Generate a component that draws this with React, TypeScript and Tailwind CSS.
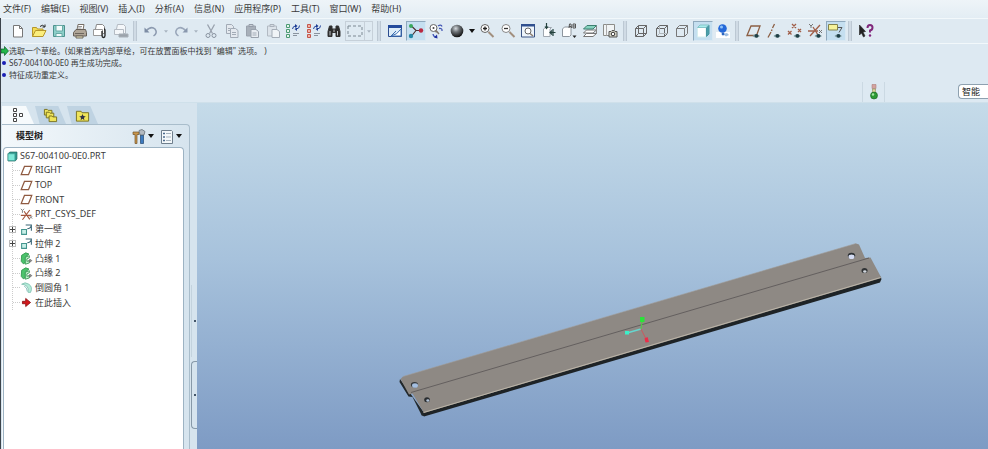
import { useState } from "react";
import type { ReactNode } from "react";
import clsx from "clsx";

const Icon = ({ children, size = "w-4 h-4" }: { children: ReactNode; size?: string }) => (
  <svg viewBox="0 0 16 16" className={clsx(size, "shrink-0")} fill="none" stroke="#555" strokeWidth="1">
    {children}
  </svg>
);

const Eye = () => (
  <g stroke="none">
    <path d="M6.500 13q3-3.500 7.500 0q-4 3-7.500 0z" fill="#7e9a9c" />
    <circle cx="10.500" cy="12.800" r="1.900" fill="#1f3f46" />
  </g>
);

const icons = {
  newFile: (
    <Icon>
      <path d="M3.500 2.500h6l3 3v8.500h-9z" fill="#fff" stroke="#777" />
      <path d="M9.500 2.500v3h3" stroke="#777" />
    </Icon>
  ),
  open: (
    <Icon>
      <path d="M1.500 13.500v-9h4l1 1.500h5.500v2" fill="#f3dc55" stroke="#b5962a" />
      <path d="M1.500 13.500l3-6h10.500l-3 6z" fill="#fbee7c" stroke="#b5962a" />
      <path d="M9 3.500q2.500-2.500 4.500 0M14 1.500v2.500h-2.500" stroke="#222" />
    </Icon>
  ),
  save: (
    <Icon>
      <path d="M2.500 2.500h11v11h-11z" fill="#8ccfc9" stroke="#4c918d" />
      <path d="M5 2.500h6.500v5.500h-6.500zM5 10.500h6v3h-6z" fill="#f2fbfb" stroke="#69a9a5" />
    </Icon>
  ),
  print: (
    <Icon>
      <path d="M5 7l1-5.500h6l-1 5.500z" fill="#fff" stroke="#776f66" />
      <path d="M1.500 9.500l2.500-3h9.500l1 3v3.500h-13z" fill="#b0a698" stroke="#665f57" />
      <path d="M3 10.500h9M4 13h7v2h-7z" fill="#eee7c2" stroke="#6d665d" />
      <path d="M6 3.500h4M5.500 5h4" stroke="#999" />
    </Icon>
  ),
  mail: (
    <Icon>
      <path d="M4.500 1.500h6l2 2v7h-10z" fill="#fff" stroke="#888" />
      <path d="M1.500 6.500h9v6h-9z" fill="#fff" stroke="#999" />
      <path d="M10 8v4.500q0 2 1.500 2t1.500-2v-5q0-1.500-1-1.500" stroke="#222" strokeWidth="1.300" />
    </Icon>
  ),
  mailLink: (
    <Icon>
      <path d="M4.500 1.500h6l2 2v7h-10z" fill="#f4f7fa" stroke="#b4bbc3" />
      <path d="M1.500 6.500h9v5h-9z" fill="#f4f7fa" stroke="#b4bbc3" />
      <path d="M6 11h9v3h-9z" fill="#9ba3ab" stroke="#a8b0b8" />
    </Icon>
  ),
  undo: (
    <Icon>
      <path d="M3 8q5-5.500 9-2q3 4-1.500 7" stroke="#8d9bb0" strokeWidth="1.500" />
      <path d="M1.500 4.500v5h5z" fill="#7d8ca4" stroke="none" />
    </Icon>
  ),
  redo: (
    <Icon>
      <path d="M13 8q-5-5.500-9-2q-3 4 1.500 7" stroke="#9aa7ba" strokeWidth="1.500" />
      <path d="M14.500 4.500v5h-5z" fill="#8998ae" stroke="none" />
    </Icon>
  ),
  cut: (
    <Icon>
      <path d="M4.500 1.500l5 9M11.500 1.500l-5 9" stroke="#98a1ad" strokeWidth="1.300" />
      <circle cx="5" cy="12.500" r="2" stroke="#8993a0" />
      <circle cx="11" cy="12.500" r="2" stroke="#8993a0" />
    </Icon>
  ),
  copy: (
    <Icon>
      <path d="M2.500 1.500h5l2 2v7h-7z" fill="#e4e9ef" stroke="#a2abb6" />
      <path d="M6.500 5.500h5l2.500 2v7h-7.500z" fill="#e4e9ef" stroke="#a2abb6" />
      <path d="M4 5.500h2M4 7.500h2M8 9.500h4M8 11.500h4" stroke="#a2abb6" />
    </Icon>
  ),
  paste: (
    <Icon>
      <path d="M2.500 3h9v10h-9z" fill="#a8b0ba" stroke="#9aa2ad" />
      <path d="M5 1.500h4v2h-4z" fill="#c9d0d7" stroke="#949ca8" />
      <path d="M7 6.500h5l2.500 2v6h-7.500z" fill="#e7ecf1" stroke="#99a2ad" />
      <path d="M8.500 10h4M8.500 12h4" stroke="#a2abb6" />
    </Icon>
  ),
  pasteSpecial: (
    <Icon>
      <path d="M2.500 3h9v10h-9z" fill="#dce3ea" stroke="#b2bac3" />
      <path d="M5 1.500h4v2h-4z" fill="#d5dce3" stroke="#aab2bc" />
      <path d="M7 6.500h5l2.500 2v6h-7.500z" fill="#f0f4f7" stroke="#a4adb7" />
    </Icon>
  ),
  regen: (
    <Icon>
      <path d="M1.500 1.500h3v3h-3zM1.500 6.500h3v3h-3zM1.500 11.500h3v3h-3z" fill="#e6f5ec" stroke="#4b9a73" />
      <path d="M7.500 6q.5-3 3-3M14.500 2.500q0 3-3 3.500" stroke="#1e3f9a" />
      <path d="M10 1l2.500 2-2.500 2zM12 4.500v3.500l-2.500-2z" fill="#1c3b94" stroke="none" />
      <path d="M8 10.500h6M8 12.500h4" stroke="#8a939e" />
    </Icon>
  ),
  regenManager: (
    <Icon>
      <path d="M1.500 1.500h3v3h-3zM1.500 6.500h3v3h-3zM1.500 11.500h3v3h-3z" fill="#f3b2a8" stroke="#c4574b" />
      <path d="M7.500 6q.5-3 3-3M14.500 2.500q0 3-3 3.500" stroke="#1e3f9a" />
      <path d="M10 1l2.500 2-2.500 2zM12 4.500v3.500l-2.500-2z" fill="#1c3b94" stroke="none" />
      <path d="M8 10.500h6M8 12.500h4" stroke="#8a939e" />
    </Icon>
  ),
  find: (
    <Icon>
      <path d="M3.500 3h2.500v3h4v-3h2.500l1.500 5.500v5h-4v-4h-4v4h-4v-5z" fill="#2b2b2b" stroke="#333" />
      <path d="M4 8v4.500M11.500 8v4.500M8 6.500v2.500" stroke="#c3c7ca" />
    </Icon>
  ),
  repaint: (
    <Icon>
      <path d="M1.500 2.500h13v11h-13z" fill="#dcecf8" stroke="#2a4b8f" />
      <path d="M1 2h14v3h-14z" fill="#244b9c" stroke="none" />
      <path d="M14 6v7h-10q6-1 10-7z" fill="#fff" stroke="#4376b6" />
      <path d="M4 13l5-5" stroke="#3d6cae" />
    </Icon>
  ),
  spinCenter: (
    <Icon>
      <path d="M4 3.500l4 4h4M8 7.500l-4 5" stroke="#4d3030" strokeWidth="1.200" />
      <circle cx="3" cy="3" r="2" fill="#39a85c" stroke="none" />
      <circle cx="13" cy="7.500" r="2.200" fill="#b92840" stroke="none" />
      <circle cx="3" cy="13" r="2.200" fill="#2387a6" stroke="none" />
    </Icon>
  ),
  orient: (
    <Icon>
      <circle cx="5.500" cy="5" r="3.500" fill="#fff" stroke="#666" />
      <circle cx="5.500" cy="5" r="1" fill="#444" stroke="none" />
      <path d="M8 7.500l3 3.500M8.500 9.500l-1-2" stroke="#7f756a" strokeWidth="1.400" />
      <path d="M10 3q3-2 4 .5M11 5.500q3.500-.500 3 2.500M5 11q.5 3 3 3" stroke="#4457b5" strokeWidth="1.300" />
      <path d="M6 14.500l3-3 .5 4z" fill="#1d2ea0" stroke="none" />
    </Icon>
  ),
  shade: (
    <Icon>
      <defs>
        <radialGradient id="ball" cx="0.4" cy="0.3" r="0.700">
          <stop offset="0" stopColor="#d6dade" />
          <stop offset="0.4" stopColor="#6f7478" />
          <stop offset="1" stopColor="#111" />
        </radialGradient>
      </defs>
      <circle cx="8" cy="8" r="6.300" fill="url(#ball)" stroke="none" />
    </Icon>
  ),
  zoomIn: (
    <Icon>
      <path d="M9.500 9l5 5" stroke="#a28f7e" strokeWidth="2" />
      <circle cx="6" cy="5.500" r="4" fill="#fff" stroke="#666" />
      <path d="M4 5.500h4M6 3.500v4" stroke="#222" strokeWidth="1.300" />
    </Icon>
  ),
  zoomOut: (
    <Icon>
      <path d="M9.500 9l5 5" stroke="#a28f7e" strokeWidth="2" />
      <circle cx="6" cy="5.500" r="4" fill="#fff" stroke="#888" />
      <path d="M4 5.500h4" stroke="#333" strokeWidth="1.300" />
    </Icon>
  ),
  refit: (
    <Icon>
      <path d="M1.500 1.500h13v12.500h-13z" fill="#eef5fb" stroke="#3c5484" />
      <path d="M1 1h14v2.500h-14z" fill="#30508f" stroke="none" />
      <circle cx="8" cy="8" r="3" fill="#fff" stroke="#666" />
      <path d="M10 10.500l3 2.500" stroke="#8a7a6c" strokeWidth="1.500" />
    </Icon>
  ),
  reorient: (
    <Icon>
      <path d="M2.500 6l2-1.500h6l-1.500 1.500v7.500h-6.500z" fill="#fff" stroke="#a0a8b0" />
      <path d="M5.500 0v5M4 3.500l1.500 2 1.500-2" stroke="#22403c" strokeWidth="1.200" />
      <path d="M14.500 9.500h-5M11 7.500l-2 2 2 2M12 6v7" stroke="#22403c" strokeWidth="1.200" />
    </Icon>
  ),
  savedViews: (
    <Icon>
      <path d="M1.500 6l2-2h6.500v8l-1.500 1.500h-7z" fill="#fff" stroke="#8e969e" />
      <path d="M8 5l.500-4h1.500l.5 4M8 3.500h2M12 1v4h2.500v-4zM12 3h2.500" stroke="#555" />
      <path d="M11.500 12.500h4l-2 2.500z" fill="#222" stroke="none" />
    </Icon>
  ),
  layers: (
    <Icon>
      <path d="M1.500 13.500l3-3h10l-3.500 3z" fill="#fff" stroke="#777" />
      <path d="M1.500 10l3-3h10l-3.500 3z" fill="#fff" stroke="#777" />
      <path d="M1.500 6l3.500-3.500h9.500l-3.500 3.500z" fill="#86d3bf" stroke="#3d7e70" />
      <path d="M14.500 3v8" stroke="#888" />
    </Icon>
  ),
  viewManager: (
    <Icon>
      <path d="M1.500 1.500h11v11h-11z" fill="#f1f4f5" stroke="#8c8c88" />
      <path d="M4.500 1.500v11" stroke="#aaa" />
      <path d="M7 8.500h2l1-1h2l1 1h2v5.500h-8z" fill="#d9d8c9" stroke="#555" />
      <circle cx="11" cy="11" r="1.800" fill="#fff" stroke="#333" />
    </Icon>
  ),
  wireframe: (
    <Icon>
      <path d="M2.500 5.500h8v8h-8zM5.500 2.500h8v8h-8zM2.500 5.500l3-3M10.500 5.500l3-3M2.500 13.500l3-3M10.500 13.500l3-3" stroke="#666" />
    </Icon>
  ),
  hiddenLine: (
    <Icon>
      <path d="M2.500 5.500h8v8h-8zM2.500 5.500l3-3h8v8l-3 3M10.500 5.500l3-3" stroke="#666" />
      <path d="M5.500 3v7.500h8M5.500 10.500l-3 3" stroke="#b2b8bc" />
    </Icon>
  ),
  noHidden: (
    <Icon>
      <path d="M2.500 5.500h8v8h-8zM2.500 5.500l3-3h8v8l-3 3M10.500 5.500l3-3" stroke="#777" />
    </Icon>
  ),
  shading: (
    <Icon>
      <path d="M2.500 4.500h8.500v9.500h-8.500z" fill="#fff" stroke="#d5eeee" />
      <path d="M2.500 4.500l2.500-2.500h9l-3 2.500z" fill="#a9ecec" stroke="#85c5c9" />
      <path d="M11.500 5l2.500-2.500v8.500l-2.500 2.500z" fill="#4a9faa" stroke="#4796a1" />
    </Icon>
  ),
  realism: (
    <Icon>
      <path d="M1 9h14v6h-14z" fill="#fff" stroke="none" />
      <path d="M8 11l4-1 2 2-3 1.500z" fill="#9bbbe0" stroke="none" />
      <circle cx="7.500" cy="5.500" r="4.300" fill="#2468d8" stroke="none" />
      <circle cx="6.500" cy="4" r="1.500" fill="#8fc3fb" stroke="none" />
      <circle cx="8" cy="11" r="1.400" fill="#2c66c0" stroke="none" />
    </Icon>
  ),
  planes: (
    <Icon>
      <path d="M1 12.500l4-9.500h9l-3.500 9.500z" stroke="#8c5f44" strokeWidth="1.300" />
      <Eye />
    </Icon>
  ),
  axes: (
    <Icon>
      <path d="M7.500 1l-2 4M5 6.500l-.5 1.500M4 9l-3 5.500" stroke="#8c5f44" strokeWidth="1.300" />
      <Eye />
    </Icon>
  ),
  points: (
    <Icon>
      <path d="M5 1l4 4M9 1l-4 4M1 8l3.500 3.500M4.500 8l-3.500 3.500M11 6l3 3M14 6l-3 3" stroke="#a15f49" strokeWidth="1.300" />
      <Eye />
    </Icon>
  ),
  csys: (
    <Icon>
      <path d="M0 8h10M2 13l10-11M5 4l5 8" stroke="#a15f49" strokeWidth="1.300" />
      <path d="M1 1l2 2 2-2M3 3v2M11 7l3 3M14 7l-3 3" stroke="#777" />
      <Eye />
    </Icon>
  ),
  annotation: (
    <Icon>
      <path d="M.5 1.500h9v5.500h-9z" fill="#f6f39a" stroke="#83834d" />
      <path d="M10 4.500h4l-3 5" stroke="#555" />
      <Eye />
    </Icon>
  ),
  help: (
    <Icon>
      <path d="M1.500 2l6 6.500-2.500.5 2 4-1.500 1-2-4-2 2z" fill="#222" stroke="#222" strokeWidth="0.600" />
      <path d="M9.500 5q0-3 2.500-3t2.500 2.500-2.500 3v2" stroke="#80287c" strokeWidth="2" />
      <circle cx="12" cy="12.500" r="1.200" fill="#80287c" stroke="none" />
    </Icon>
  ),
};

type IconName = keyof typeof icons;
type Tool = { id: IconName; label: string };

const fileTools: Tool[] = [
  { id: "newFile", label: "新建" },
  { id: "open", label: "打开" },
  { id: "save", label: "保存" },
  { id: "print", label: "打印" },
  { id: "mail", label: "发送邮件" },
  { id: "mailLink", label: "发送链接" },
];

const editTools: Tool[] = [
  { id: "cut", label: "剪切" },
  { id: "copy", label: "复制" },
  { id: "paste", label: "粘贴" },
  { id: "pasteSpecial", label: "选择性粘贴" },
  { id: "regen", label: "再生" },
  { id: "regenManager", label: "再生管理器" },
  { id: "find", label: "查找" },
];

const viewTools: Tool[] = [
  { id: "repaint", label: "重画" },
  { id: "spinCenter", label: "旋转中心" },
  { id: "orient", label: "定向模式" },
  { id: "shade", label: "外观库" },
];

const zoomTools: Tool[] = [
  { id: "zoomIn", label: "放大" },
  { id: "zoomOut", label: "缩小" },
  { id: "refit", label: "重新调整" },
  { id: "reorient", label: "重定向" },
  { id: "savedViews", label: "已保存视图" },
  { id: "layers", label: "层" },
  { id: "viewManager", label: "视图管理器" },
];

const displayTools: Tool[] = [
  { id: "wireframe", label: "线框" },
  { id: "hiddenLine", label: "隐藏线" },
  { id: "noHidden", label: "消隐" },
  { id: "shading", label: "着色" },
  { id: "realism", label: "增强的真实感" },
];

const datumTools: Tool[] = [
  { id: "planes", label: "平面显示" },
  { id: "axes", label: "轴显示" },
  { id: "points", label: "点显示" },
  { id: "csys", label: "坐标系显示" },
  { id: "annotation", label: "注释显示" },
];

const menus = [
  "文件(F)",
  "编辑(E)",
  "视图(V)",
  "插入(I)",
  "分析(A)",
  "信息(N)",
  "应用程序(P)",
  "工具(T)",
  "窗口(W)",
  "帮助(H)",
];

const Grip = () => <div className="w-1 h-5 shrink-0 border-x border-[#bcc8d3] bg-[#d0dbe5]" />;

const Caret = ({ label, dim }: { label: string; dim?: boolean }) => (
  <button aria-label={label} className="w-[10px] h-5 shrink-0 flex items-center justify-center">
    <svg viewBox="0 0 6 4" className={clsx(dim ? "w-1 h-[3px]" : "w-[6px] h-1")}>
      <path d="M0 0h6l-3 4z" fill={dim ? "#a9b4c0" : "#111"} />
    </svg>
  </button>
);

const ToolButton = ({ id, label, active, onClick }: Tool & { active?: boolean; onClick?: () => void }) => (
  <button
    aria-label={label}
    aria-pressed={active}
    onClick={onClick}
    className={clsx(
      "w-5 h-5 shrink-0 flex items-center justify-center",
      active && "bg-[#c5dff0] border border-[#8fa9bd] border-b-[#d9e8f2] border-r-[#d9e8f2]"
    )}
  >
    {icons[id]}
  </button>
);

function Toolbar() {
  const [pressed, setPressed] = useState<IconName[]>(["spinCenter", "shading", "annotation"]);

  const toggle = (id: IconName) => {
    setPressed((prev) => (prev.includes(id) ? prev.filter((p) => p !== id) : [...prev, id]));
  };

  const render = (tools: Tool[], canToggle = false) =>
    tools.map((tool) => (
      <ToolButton
        key={tool.id}
        {...tool}
        active={pressed.includes(tool.id)}
        onClick={canToggle ? () => toggle(tool.id) : undefined}
      />
    ));

  return (
    <div className="flex items-center h-[26px] pl-[7px] border-y border-y-[#f2f8fb] bg-[#dfeaf2]">
      <div className="flex justify-between w-[123px] shrink-0">{render(fileTools)}</div>
      <div className="pl-[2px] pr-1">
        <Grip />
      </div>
      <ToolButton id="undo" label="撤消" />
      <Caret label="撤消列表" dim />
      <ToolButton id="redo" label="重做" />
      <Caret label="重做列表" dim />
      <div className="flex justify-between w-[143px] shrink-0">{render(editTools)}</div>
      <div className="flex ml-px mr-1 border border-[#c6d0d9] shrink-0">
        <button aria-label="选取框" className="w-[18px] h-[18px] flex items-center justify-center">
          <svg viewBox="0 0 16 12" className="w-4 h-3">
            <path d="M1 1h14v10h-14z" fill="none" stroke="#7d8993" strokeDasharray="3 2" />
          </svg>
        </button>
        <button aria-label="选取方式" className="w-2 h-[18px] flex items-center justify-center border-l border-[#c6d0d9]">
          <svg viewBox="0 0 6 4" className="w-1 h-[3px]">
            <path d="M0 0h6l-3 4z" fill="#a9b4c0" />
          </svg>
        </button>
      </div>
      <Grip />
      <div className="flex justify-between w-[82px] ml-1 shrink-0">{render(viewTools, true)}</div>
      <Caret label="外观列表" />
      <div className="flex justify-between w-[143px] shrink-0">{render(zoomTools)}</div>
      <div className="pl-[3px] pr-1">
        <Grip />
      </div>
      <div className="flex justify-between w-[102px] shrink-0">{render(displayTools, true)}</div>
      <div className="pl-[2px] pr-[5px]">
        <Grip />
      </div>
      <div className="flex justify-between w-[102px] shrink-0">{render(datumTools, true)}</div>
      <div className="pl-[2px] pr-1">
        <Grip />
      </div>
      <ToolButton id="help" label="上下文帮助" />
    </div>
  );
}

const messages = [
  "选取一个草绘。(如果首选内部草绘，可在放置面板中找到 \"编辑\" 选项。 )",
  "S67-004100-0E0 再生成功完成。",
  "特征成功重定义。",
];

function MessageArea() {
  return (
    <section className="bg-[#dde9f2] border-b border-[#cfe0ea] pt-px">
      <ul className="text-[8px] leading-3 text-[#3a3a3a]">
        {messages.map((text, idx) => (
          <li key={text} className="flex items-center h-3">
            <span className="w-2 flex justify-center shrink-0">
              {idx === 0 ? (
                <svg viewBox="0 0 8 10" className="w-2 h-[10px]">
                  <path d="M0 3h3.500v-2.500l4 4.500-4 4.500v-2.500h-3.500z" fill="#23b64a" stroke="#0c5f27" strokeWidth="0.700" />
                </svg>
              ) : (
                <span className="w-1 h-1 mr-[2px] rounded-full bg-[#1a1fb4]" />
              )}
            </span>
            {text}
          </li>
        ))}
      </ul>
      <div className="flex justify-end items-center h-[21px]">
        <div className="w-[23px] h-5 flex items-center justify-center border-x border-[#cbd9e3] mr-[73px]">
          <svg viewBox="0 0 8 16" className="w-2 h-4">
            <path d="M2 .5h4v4h-4z" fill="#d3a3a0" stroke="#b07f7c" strokeWidth="0.600" />
            <path d="M2.500 5h3v4h-3z" fill="#ddd6a0" stroke="#8d8f58" strokeWidth="0.600" />
            <circle cx="4" cy="11.500" r="3.500" fill="#2c9a35" stroke="#176220" strokeWidth="0.600" />
            <circle cx="3" cy="10.500" r="1.200" fill="#a5e5a4" />
          </svg>
        </div>
        <select
          aria-label="过滤器"
          className="appearance-none w-[30px] h-[15px] pl-[3px] rounded-l-sm border border-r-0 border-[#8ea1b0] bg-white text-[9px] leading-3 text-[#222]"
        >
          <option>智能</option>
        </select>
      </div>
    </section>
  );
}

const PlaneIcon = () => (
  <Icon size="w-[13px] h-[13px]">
    <path d="M1.500 13l4-10h9l-4 10z" fill="#fff" stroke="#8f5a41" strokeWidth="1.500" />
  </Icon>
);

const CsysIcon = () => (
  <Icon size="w-[13px] h-[13px]">
    <path d="M1 9h13M3 14.500l9-12M5 4l7 10" stroke="#a4553c" strokeWidth="1.400" />
    <path d="M1 1l2 2 2-2M3 3v3M12 10l3 3M15 10l-3 3" stroke="#666" />
  </Icon>
);

const ExtrudeIcon = () => (
  <Icon size="w-[13px] h-[13px]">
    <path d="M2 8h6v6h-6z" fill="#c8efe8" stroke="#43958e" strokeWidth="1.300" />
    <path d="M7 2.500h7v7M14 3q-1 4-5 4" stroke="#3a6676" strokeWidth="1.300" />
  </Icon>
);

const FlangeIcon = () => (
  <Icon size="w-[13px] h-[13px]">
    <path d="M2 4l5-3 4 1.500-4 3.500v7l-3 1.500-2.500-3z" fill="#4cc36c" stroke="#2a9149" />
    <path d="M6.500 6.500l5-2v2.500l-3 1.500v3l3-1v3l-5 1.500z" fill="#c2f2cd" stroke="#2a9149" />
    <path d="M12 9l2.500 1.500-2 2-1.500-1z" fill="#999" stroke="#666" />
  </Icon>
);

const RoundIcon = () => (
  <Icon size="w-[13px] h-[13px]">
    <path d="M2 4q4-3.500 9 0t2 10h-3q1-5-1.500-7.500t-6.500-2.500z" fill="#b4ebd8" stroke="#7fbfb0" />
    <path d="M5 6q4 2 4 7" stroke="#6cb0aa" />
  </Icon>
);

const InsertIcon = () => (
  <Icon size="w-[13px] h-[13px]">
    <path d="M3 6.500h4v-3.500l6 5-6 5v-3.500h-4z" fill="#d3171b" stroke="#860d10" />
  </Icon>
);

const nodes = [
  { label: "RIGHT", icon: <PlaneIcon /> },
  { label: "TOP", icon: <PlaneIcon /> },
  { label: "FRONT", icon: <PlaneIcon /> },
  { label: "PRT_CSYS_DEF", icon: <CsysIcon /> },
  { label: "第一壁", icon: <ExtrudeIcon />, expandable: true },
  { label: "拉伸 2", icon: <ExtrudeIcon />, expandable: true },
  { label: "凸缘 1", icon: <FlangeIcon /> },
  { label: "凸缘 2", icon: <FlangeIcon /> },
  { label: "倒圆角 1", icon: <RoundIcon /> },
  { label: "在此插入", icon: <InsertIcon /> },
];

const FolderPath = ({ d }: { d: string }) => <path d={d} fill="#efe45a" stroke="#77701f" />;

function ModelTree() {
  return (
    <aside className="flex shrink-0 bg-[#d6e4ee]">
      <div className="flex flex-col w-[189px] pt-[3px] pl-px">
        <div className="flex h-[18px] gap-px">
          <button
            aria-label="模型树"
            className="w-8 flex items-center justify-center bg-[#f6fafc] [clip-path:polygon(0_0,75%_0,100%_100%,0_100%)]"
          >
            <svg viewBox="0 0 12 14" className="w-3 h-[14px]" fill="#fff" stroke="#444">
              <path d="M1.500.5h3v3h-3zM1.500 5.500h3v3h-3zM1.500 10.500h3v3h-3zM7.500 5.500h3v3h-3z" />
            </svg>
          </button>
          <button
            aria-label="文件夹浏览器"
            className="w-[31px] flex items-center justify-center bg-[#bfd3e2] [clip-path:polygon(0_0,75%_0,100%_100%,15%_100%)]"
          >
            <svg viewBox="0 0 16 16" className="w-[15px] h-[15px]">
              <FolderPath d="M1.500 1.500h3l1 1h4v5h-8z" />
              <FolderPath d="M3.500 4.500h3l1 1h4v5h-8z" />
              <FolderPath d="M6.500 8.500h3l1 1h4v5h-8z" />
            </svg>
          </button>
          <button
            aria-label="收藏夹"
            className="w-[31px] flex items-center justify-center bg-[#bfd3e2] [clip-path:polygon(0_0,75%_0,100%_100%,15%_100%)]"
          >
            <svg viewBox="0 0 16 16" className="w-[15px] h-[15px]">
              <FolderPath d="M1.500 3.500h5l1 1.500h7v9h-13z" />
              <path d="M8 6.500l1 2 2.500.5-2 1.500.5 2.500-2-1.500-2 1.500.500-2.500-2-1.500 2.500-.500z" fill="#334" />
            </svg>
          </button>
        </div>

        <div className="flex-1 flex flex-col border-t border-r border-[#a9bdcb] rounded-tr-sm bg-linear-to-r from-[#f3f8fb] to-[#d6e4ee] pr-[5px]">
          <div className="flex items-center h-[22px] pl-[14px]">
            <h2 className="flex-1 text-[9px] font-bold text-[#222]">模型树</h2>
            <button aria-label="设置" className="w-[14px] h-5 flex items-center justify-center">
              <svg viewBox="0 0 14 15" className="w-[14px] h-[15px]">
                <path d="M1 3h6v2.500h-2v9h-2v-9h-2z" fill="#c9964c" stroke="#70532d" strokeWidth="0.700" />
                <path d="M8.500 6h3v8.500h-3z" fill="#3d7bc0" stroke="#23466f" strokeWidth="0.700" />
                <path d="M7 1.500l3-1 3 2-1 3.500h-4z" fill="#b4bac0" stroke="#5c646b" strokeWidth="0.700" />
              </svg>
            </button>
            <Caret label="设置列表" />
            <button aria-label="显示" className="ml-1 w-[14px] h-5 flex items-center justify-center">
              <svg viewBox="0 0 14 15" className="w-[14px] h-[15px]">
                <path d="M1.500 1.500h10l1 1v12h-11z" fill="#f4f8fa" stroke="#6f7f8d" />
                <path d="M3 4.500h2M3 8h2M3 11.500h2" stroke="#4a6a8d" strokeWidth="1.500" />
                <path d="M6 4.500h5M6 8h5M6 11.500h5" stroke="#a6b3be" />
              </svg>
            </button>
            <Caret label="显示列表" />
          </div>

          <div className="flex-1 ml-px pt-px border-t border-x border-[#9db3c3] rounded-t-sm bg-white text-[9px] leading-3 text-[#3a3a3a]">
            <div className="flex items-center h-[14px] pl-[3px] gap-[2px]">
              <Icon size="w-[11px] h-[11px]">
                <path d="M1.500 4l2.500-2.500h10.500v10l-2.500 3h-10.500z" fill="#2f9a90" stroke="#24655f" />
                <path d="M1.500 4h10v10h-10z" fill="#7ee8d8" stroke="#3a9b90" />
              </Icon>
              S67-004100-0E0.PRT
            </div>
            <ul className="flex flex-col h-[147px] ml-2 border-l border-dotted border-[#ccc]">
              {nodes.map((node) => (
                <li key={node.label} className="flex flex-1 items-center">
                  {node.expandable ? (
                    <button
                      aria-label={`展开 ${node.label}`}
                      className="-ml-1 mr-1 w-[7px] h-[7px] shrink-0 border border-[#bbb] bg-white"
                    >
                      <svg viewBox="0 0 5 5" className="w-[5px] h-[5px]">
                        <path d="M0 2.500h5M2.500 0v5" stroke="#444" />
                      </svg>
                    </button>
                  ) : (
                    <span className="w-[7px] shrink-0 border-t border-dotted border-[#ccc]" />
                  )}
                  {node.icon}
                  <span className="pl-[2px]">{node.label}</span>
                </li>
              ))}
            </ul>
          </div>
        </div>
      </div>

      {/* Sash buttons */}
      <div className="flex flex-col items-end w-[7px] pt-[182px] gap-1">
        <button aria-label="展开面板" className="w-[6px] h-[72px] flex items-center justify-center border-l border-[#c3d3de]">
          <span className="w-[2px] h-[2px] bg-[#44566a]" />
        </button>
        <button
          aria-label="折叠面板"
          className="w-[6px] h-[68px] flex items-center justify-center border border-r-0 border-[#8799a8] rounded-l-sm"
        >
          <span className="w-[2px] h-[2px] bg-[#44566a]" />
        </button>
      </div>
    </aside>
  );
}

function Viewport() {
  return (
    <main className="flex-1 min-w-0 bg-linear-to-b from-[#c5dbe9] via-[#a7c2dc] via-45% to-[#7e9bc4]">
      <svg viewBox="197 103 791 346" className="w-full h-full" role="img" aria-label="S67-004100-0E0">
        {/* bottom edge */}
        <path d="M422 412L880 276L881.500 279L880 282.500L424 416.500L421.500 414.500z" fill="#1e2326" />
        {/* left edge */}
        <path d="M400 379L399.500 382L408.500 396.500L412.500 397L422 416L425 414z" fill="#22282b" />
        <path
          d="M400.500 379L403 376.500L856 243.500L859 244.500L865 258L870.500 257.500L881.500 278L424 413L412.500 393.500L409 394.500z"
          fill="#8e8984"
        />
        <path d="M423.500 412.500L880.500 277.500" stroke="#bcb5a8" strokeWidth="1" />
        <path d="M411 392.500L869 258" stroke="#5f5a5a" strokeWidth="0.900" />
        <path d="M403 376.500L856 243.500" stroke="#a09c98" strokeWidth="0.600" />

        <ellipse cx="414.500" cy="384.800" rx="3.600" ry="2.700" fill="#33373a" />
        <ellipse cx="415" cy="385.500" rx="3" ry="2.300" fill="#a5bfe0" />
        <ellipse cx="427" cy="399.800" rx="2.800" ry="2.500" fill="#2a2d30" />
        <ellipse cx="427.800" cy="400.500" rx="1.500" ry="1.300" fill="#b3c4d8" />
        <ellipse cx="851.500" cy="255.600" rx="3.700" ry="2.900" fill="#2d3134" />
        <ellipse cx="851.500" cy="256.800" rx="3" ry="2.300" fill="#d5dcf3" />
        <ellipse cx="864.500" cy="270.500" rx="3" ry="2.600" fill="#303335" />
        <ellipse cx="864.800" cy="271.500" rx="1.700" ry="1.300" fill="#d3d8de" />

        {/* spin center */}
        <path d="M641 329L627 333" stroke="#66d6cf" strokeWidth="1.500" />
        <path d="M641 329L642.500 319" stroke="#54c84a" strokeWidth="1.200" />
        <path d="M641 329L646.500 340" stroke="#d0525a" strokeWidth="0.900" />
        <path d="M625 331h4v3.500h-4z" fill="#3af0c9" />
        <path d="M640 317h4.500v5h-4.500z" fill="#2be339" />
        <path d="M644.500 338.500l3-1.500 1.500 5-3.500.5z" fill="#ec2c48" />
      </svg>
    </main>
  );
}

export default function App() {
  return (
    <div
      lang="zh-CN"
      className="min-h-screen flex flex-col overflow-hidden bg-[#dde9f2] font-['Noto_Sans','Noto_Sans_CJK_SC',sans-serif]"
    >
      <nav className="flex items-center gap-[10px] h-[18px] pl-[3px] bg-linear-to-b from-[#eef4f8] to-[#e3edf4] text-[9px] leading-3 text-[#3a3a3a]">
        {menus.map((menu) => (
          <button key={menu} className="whitespace-nowrap">
            {menu}
          </button>
        ))}
      </nav>
      <div className="flex-1 flex flex-col border-l border-[#3c444b]">
        <Toolbar />
        <MessageArea />
        <div className="flex-1 flex">
          <ModelTree />
          <Viewport />
        </div>
      </div>
    </div>
  );
}
